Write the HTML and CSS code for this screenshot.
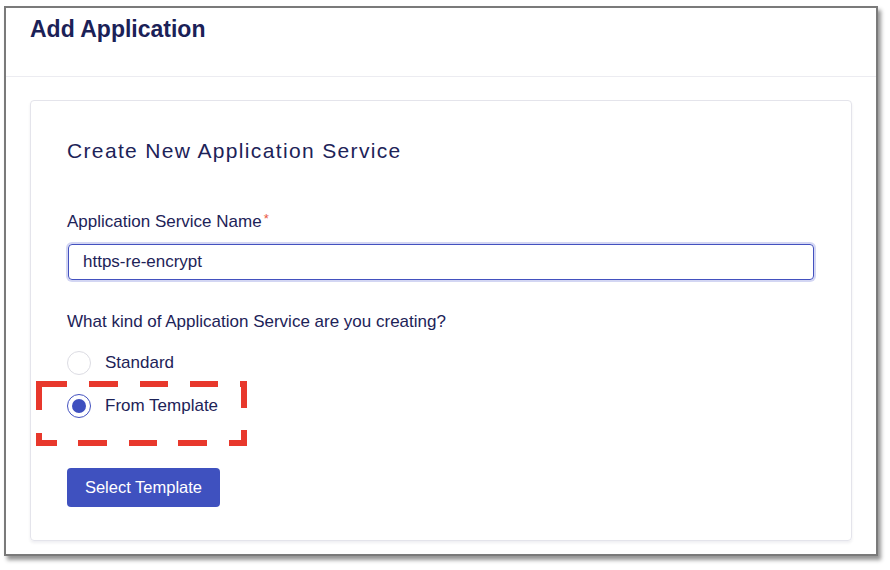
FILE: index.html
```html
<!DOCTYPE html>
<html lang="en">
<head>
<meta charset="utf-8">
<title>Add Application</title>
<link rel="stylesheet" href="styles.css">
</head>
<body>
<div class="frame">
  <header class="page-header">
    <h1 class="page-title">Add Application</h1>
  </header>
  <main class="page-main">
    <section class="card">
      <h2 class="card-title">Create New Application Service</h2>
      <label class="field-label" for="svc">Application Service Name<span class="req">*</span></label>
      <div class="input" id="svc">https-re-encrypt</div>
      <p class="question">What kind of Application Service are you creating?</p>
      <div class="radio-group">
        <div class="radio-row"><span class="radio"></span><span class="radio-label">Standard</span></div>
        <div class="radio-row"><span class="radio radio-on"></span><span class="radio-label">From Template</span></div>
      </div>
      <button class="btn">Select Template</button>
    </section>
  </main>
  <svg class="highlight" width="211" height="65" viewBox="0 0 211 65">
    <g fill="#e8382c">
      <rect x="0" y="0" width="31" height="6"/>
      <rect x="53" y="0" width="29" height="6"/>
      <rect x="104" y="0" width="28" height="6"/>
      <rect x="154" y="0" width="28" height="6"/>
      <rect x="204" y="0" width="7" height="6"/>
      <rect x="0" y="0" width="6" height="29"/>
      <rect x="0" y="52" width="6" height="13"/>
      <rect x="205" y="0" width="6" height="27"/>
      <rect x="205" y="49" width="6" height="16"/>
      <rect x="0" y="59" width="21" height="6"/>
      <rect x="42" y="59" width="29" height="6"/>
      <rect x="93" y="59" width="28" height="6"/>
      <rect x="142" y="59" width="29" height="6"/>
      <rect x="193" y="59" width="18" height="6"/>
    </g>
  </svg>
</div>
</body>
</html>
```

FILE: styles.css
```css
* { box-sizing: border-box; }
html, body { margin: 0; padding: 0; background: #ffffff; }
body {
  font-family: "Liberation Sans", Arial, sans-serif;
  color: #1d2358;
  width: 890px;
  height: 570px;
  padding: 6px 0 0 4px;
}
.frame {
  position: relative;
  width: 874px;
  height: 550px;
  border: 2px solid #7a7a7a;
  background: #ffffff;
  box-shadow: 3px 4px 4px rgba(0, 0, 0, 0.42);
  overflow: hidden;
}
.page-header {
  height: 69px;
  padding: 7px 24px 0;
  border-bottom: 1px solid #ececf1;
}
.page-title {
  margin: 0;
  font-size: 23px;
  line-height: 28px;
  font-weight: 700;
  color: #1b2157;
}
.page-main {
  padding: 23px 24px 0;
}
.card {
  border: 1px solid #e4e4eb;
  border-radius: 4px;
  box-shadow: 0 2px 3px rgba(30, 30, 70, 0.07);
  padding: 36px 36px 33px;
}
.card-title {
  margin: 0;
  font-size: 21px;
  line-height: 28px;
  font-weight: 400;
  letter-spacing: 1.35px;
  color: #1d2358;
}
.field-label {
  display: block;
  margin-top: 44px;
  font-size: 17px;
  line-height: 20px;
}
.req {
  color: #e9573f;
  font-size: 13px;
  vertical-align: 4px;
  margin-left: 2px;
}
.input {
  margin: 12px 1px 0;
  height: 36px;
  border: 1px solid #4351bf;
  border-radius: 4px;
  box-shadow: 0 0 0 2px #d3d6f3;
  padding: 0 14px;
  font-size: 17px;
  line-height: 34px;
  color: #1d2358;
}
.question {
  margin: 32px 0 0;
  font-size: 17px;
  line-height: 20px;
}
.radio-group {
  margin-top: 19px;
  display: flex;
  flex-direction: column;
  gap: 19px;
}
.radio-row {
  display: flex;
  align-items: center;
  gap: 14px;
  height: 24px;
}
.radio {
  position: relative;
  width: 24px;
  height: 24px;
  border-radius: 50%;
  border: 1px solid #dcdce3;
  background: #fff;
  flex: none;
}
.radio-on {
  border-color: #4351bf;
}
.radio-on::after {
  content: "";
  position: absolute;
  left: 4px;
  top: 4px;
  width: 14px;
  height: 14px;
  border-radius: 50%;
  background: #3f50bf;
}
.radio-label {
  font-size: 17px;
  line-height: 20px;
}
.btn {
  display: block;
  margin-top: 50px;
  width: 153px;
  height: 39px;
  border: none;
  border-radius: 4px;
  background: #3f51bf;
  color: #ffffff;
  font-family: "Liberation Sans", Arial, sans-serif;
  font-size: 16.5px;
  padding: 0;
}
.highlight {
  position: absolute;
  left: 30px;
  top: 373px;
}
```
